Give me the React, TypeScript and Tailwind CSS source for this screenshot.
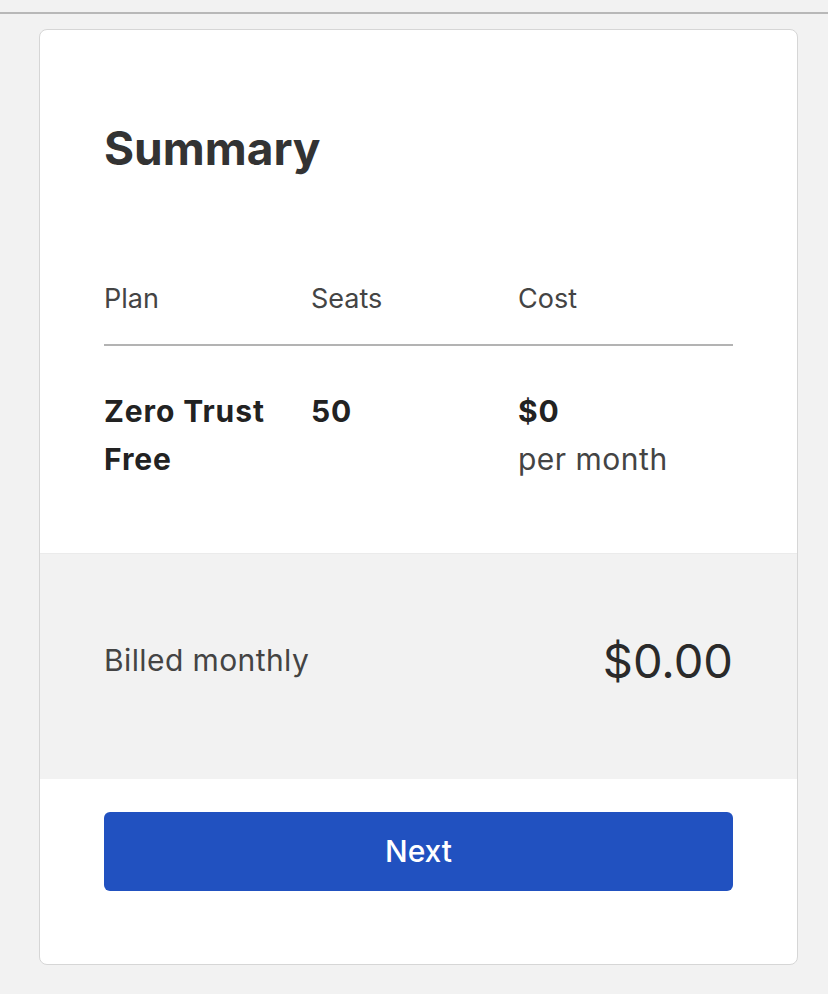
const font = "font-['Inter','Liberation_Sans',sans-serif]";

export default function App() {
  return (
    <div className={`min-h-[994px] bg-[#f2f2f2] ${font}`}>
      <div className="h-[14px] border-b-2 border-[#b8b8b8]" />
      <div className="ml-[39px] mt-[15px] w-[759px] overflow-hidden rounded-lg border border-[#d6d6d6] bg-white">
        <div className="px-16 pb-[70px] pt-[92px]">
          <h2 className="text-[46px] font-bold leading-[52px] text-[#333]">Summary</h2>
          <div className="mt-[107px] grid grid-cols-[207px_207px_1fr] border-b-2 border-[#b3b3b3] pb-[27px] text-[27px] leading-[36px] text-[#444]">
            <span>Plan</span>
            <span>Seats</span>
            <span>Cost</span>
          </div>
          <div className="grid grid-cols-[207px_207px_1fr] pt-[41px] text-[30px] leading-[48px] text-[#222]">
            <span className="font-bold tracking-[0.9px]">
              Zero Trust
              <br />
              Free
            </span>
            <span className="font-bold tracking-[0.9px]">50</span>
            <span>
              <span className="font-bold tracking-[0.9px]">$0</span>
              <br />
              <span className="tracking-[0.5px] text-[#444]">per month</span>
            </span>
          </div>
        </div>
        <div className="flex h-[226px] items-center justify-between border-t border-[#ebebeb] bg-[#f2f2f2] px-16 pb-[12px]">
          <span className="text-[30px] tracking-[0.4px] text-[#444]">Billed monthly</span>
          <span className="text-[47px] leading-none text-[#2a2a2a]">$0.00</span>
        </div>
        <div className="px-16 pb-[73px] pt-[33px]">
          <button className="flex h-[79px] w-full items-center justify-center rounded-md bg-[#2151c0] text-[30px] font-medium text-white">
            Next
          </button>
        </div>
      </div>
    </div>
  );
}
